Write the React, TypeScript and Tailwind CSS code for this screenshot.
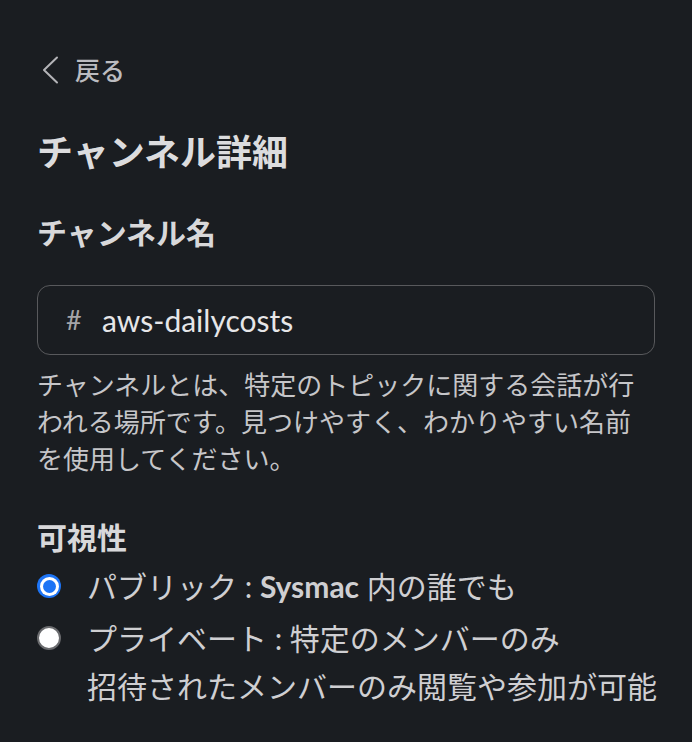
import React, { useState } from 'react';

function Radio({ checked }: { checked: boolean }) {
  if (checked) {
    return (
      <div className="w-6 h-6 shrink-0 rounded-full bg-[#1d74f5] flex items-center justify-center">
        <div className="w-[19px] h-[19px] rounded-full bg-white flex items-center justify-center">
          <div className="w-[13px] h-[13px] rounded-full bg-[#1d74f5]" />
        </div>
      </div>
    );
  }
  return <div className="w-6 h-6 shrink-0 rounded-full bg-white border-2 border-[#6a6b6e]" />;
}

export default function App() {
  const [visibility, setVisibility] = useState<'public' | 'private'>('public');

  return (
    <div className="min-h-screen w-full bg-[#1a1d21] font-['Lato','Noto_Sans_CJK_JP',sans-serif] px-[37px] pt-[50px]">
      {/* Back */}
      <div className="h-10 flex items-center text-[#bcbcc0]">
        <svg width="18" height="28" viewBox="0 0 18 28" className="ml-[4px]" fill="none">
          <path d="M16 1.5 L3 14 L16 26.5" stroke="#b4b4b8" strokeWidth="2" strokeLinecap="round" strokeLinejoin="round" />
        </svg>
        <span className="ml-[16px] text-[25px] font-medium leading-none">戻る</span>
      </div>

      {/* Title */}
      <h1 className="mt-10 text-[36px] leading-[44px] font-bold text-[#dcdcde]">チャンネル詳細</h1>

      {/* Channel name */}
      <h2 className="mt-[38px] text-[30px] leading-10 font-bold text-[#d8d8da]">チャンネル名</h2>
      <div className="mt-[33px] h-[70px] rounded-[13px] border-[1.5px] border-[#58595c] flex items-center pl-[28px]">
        <span className="text-[27px] text-[#a5a5a8] w-[36px]">#</span>
        <span className="text-[30px] text-[#e6e6e8]">aws-dailycosts</span>
      </div>
      <p className="mt-3 text-[26px] leading-[37px] text-[#c6c6c9]">
        チャンネルとは、特定のトピックに関する会話が行われる場所です。見つけやすく、わかりやすい名前を使用してください。
      </p>

      {/* Visibility */}
      <h2 className="mt-[39px] text-[30px] leading-10 font-bold text-[#d8d8da]">可視性</h2>
      <div className="mt-[5px] flex flex-col gap-1">
        <div className="flex items-start cursor-pointer" onClick={() => setVisibility('public')}>
          <div className="h-12 flex items-center">
            <Radio checked={visibility === 'public'} />
          </div>
          <div className="ml-[26px] text-[30px] leading-[48px] text-[#cfcfd2] whitespace-nowrap">
            パブリック : <span className="font-bold">Sysmac</span> 内の誰でも
          </div>
        </div>
        <div className="flex items-start cursor-pointer" onClick={() => setVisibility('private')}>
          <div className="h-12 flex items-center">
            <Radio checked={visibility === 'private'} />
          </div>
          <div className="ml-[26px] text-[30px] leading-[48px] text-[#cfcfd2] whitespace-nowrap">
            <div>プライベート : 特定のメンバーのみ</div>
            <div>招待されたメンバーのみ閲覧や参加が可能</div>
          </div>
        </div>
      </div>
    </div>
  );
}
